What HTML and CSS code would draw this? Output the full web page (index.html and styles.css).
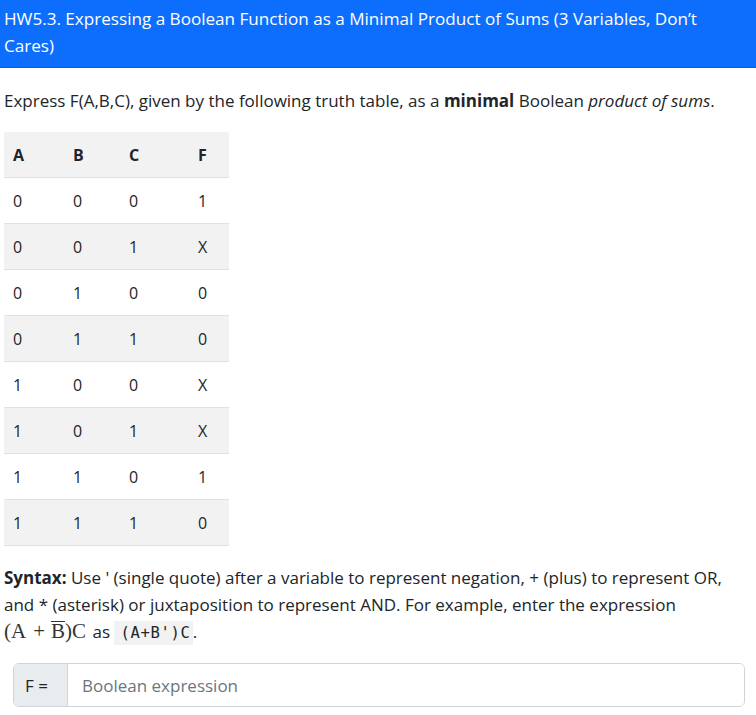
FILE: index.html
```html
<!DOCTYPE html>
<html>
<head>
<meta charset="utf-8">
<link rel="stylesheet" href="styles.css">
</head>
<body>
<div class="card">
  <div class="card-header">HW5.3. Expressing a Boolean Function as a Minimal Product of Sums (3 Variables, Don’t Cares)</div>
  <div class="card-body">
    <p class="prompt">Express F(A,B,C), given by the following truth table, as a <strong>minimal</strong> Boolean <em>product of sums</em>.</p>
    <table class="truth">
      <thead>
        <tr><th class="c1">A</th><th class="c2">B</th><th class="c3">C</th><th class="c4">F</th></tr>
      </thead>
      <tbody>
        <tr><td>0</td><td>0</td><td>0</td><td>1</td></tr>
        <tr><td>0</td><td>0</td><td>1</td><td>X</td></tr>
        <tr><td>0</td><td>1</td><td>0</td><td>0</td></tr>
        <tr><td>0</td><td>1</td><td>1</td><td>0</td></tr>
        <tr><td>1</td><td>0</td><td>0</td><td>X</td></tr>
        <tr><td>1</td><td>0</td><td>1</td><td>X</td></tr>
        <tr><td>1</td><td>1</td><td>0</td><td>1</td></tr>
        <tr><td>1</td><td>1</td><td>1</td><td>0</td></tr>
      </tbody>
    </table>
    <p class="syntax"><strong>Syntax:</strong> Use ' (single quote) after a variable to represent negation, + (plus) to represent OR, and * (asterisk) or juxtaposition to represent AND. For example, enter the expression <span class="math">(A<span class="op">+</span><span class="bar">B</span>)C</span> as <code>(A+B')C</code>.</p>
    <div class="input-group">
      <span class="addon">F =</span>
      <input class="field" type="text" placeholder="Boolean expression">
    </div>
  </div>
</div>
</body>
</html>
```

FILE: styles.css
```css
html, body {
  margin: 0;
  padding: 0;
  background: #ffffff;
}
body {
  font-family: "Open Sans", "Noto Sans", sans-serif;
  font-size: 17px;
  color: #212529;
  width: 756px;
  height: 715px;
  overflow: hidden;
}
.card-header {
  background: #0d6efd;
  color: #ffffff;
  font-size: 17.1px;
  line-height: 27px;
  padding: 5px 45px 8px 4px;
  border-bottom: 1px solid #0b5ed7;
}
.card-body {
  padding: 0 4px;
}
.prompt {
  margin: 19px 0 18px 0;
  line-height: 27px;
}
.prompt em {
  font-style: italic;
}
.truth {
  border-collapse: collapse;
  width: 225px;
  margin: 0 0 18px 0;
}
.truth th, .truth td {
  text-align: left;
  padding: 0 0 0 9px;
  height: 45px;
  border-bottom: 1px solid #dee2e6;
  font-size: 16px;
}
.truth th {
  font-weight: 700;
  background: #f2f2f2;
}
.truth tbody tr:nth-child(even) td {
  background: #f2f2f2;
}
.c1 { width: 51px; }
.c2 { width: 47px; }
.c3 { width: 60px; }
.c4 { width: 31px; }
.syntax {
  margin: 0;
  line-height: 27px;
}
.math {
  font-family: "Liberation Serif", "DejaVu Serif", serif;
  font-size: 21px;
  white-space: nowrap;
  color: #333;
  margin-right: 2px;
}
.op {
  margin: 0 6px 0 7px;
}
.bar {
  display: inline-block;
  line-height: 0.75;
  border-top: 1.5px solid currentColor;
  padding-top: 2px;
}
code {
  font-family: "DejaVu Sans Mono", "Liberation Mono", monospace;
  font-size: 15.5px;
  letter-spacing: 0.7px;
  background: #f2f2f2;
  padding: 3px 2px 3px 6px;
  color: #212529;
}
.input-group {
  display: flex;
  margin: 16px 7px 0 9px;
  height: 42px;
  border: 1px solid #ced4da;
  border-radius: 6px;
  overflow: hidden;
}
.addon {
  display: flex;
  align-items: center;
  padding: 0 11px;
  background: #e9ecef;
  border-right: 1px solid #ced4da;
  font-size: 17px;
  width: 31px;
}
.field {
  flex: 1;
  border: none;
  outline: none;
  padding: 0 14px;
  font-family: "Open Sans", "Noto Sans", sans-serif;
  font-size: 17px;
  color: #212529;
  background: #fff;
}
.field::placeholder {
  color: #6c757d;
}
```
